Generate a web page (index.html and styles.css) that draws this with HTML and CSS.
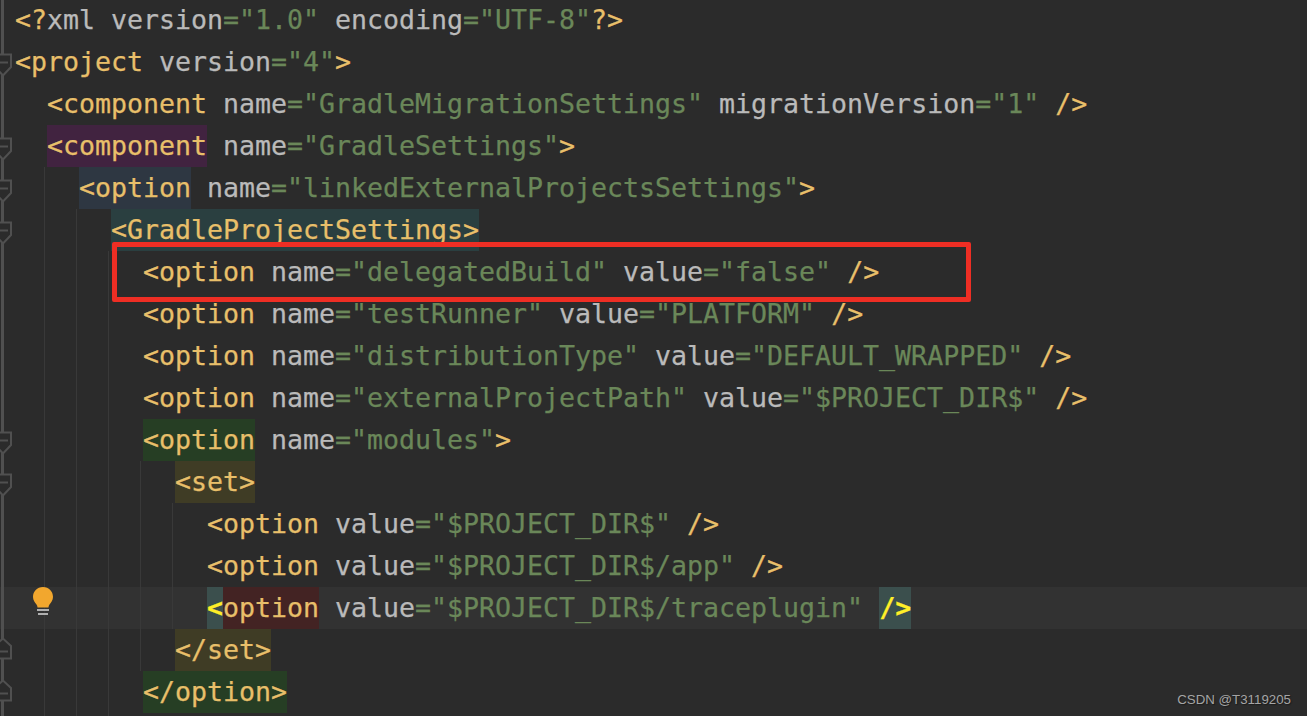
FILE: index.html
```html
<!DOCTYPE html>
<html lang="en">
<head>
<meta charset="utf-8">
<title>gradle.xml</title>
<link rel="stylesheet" href="styles.css">
</head>
<body>
<main class="editor">
  <div class="code">
    <div class="row"><span class="t">&lt;?</span><span class="a">xml version</span><span class="v">="1.0"</span> <span class="a">encoding</span><span class="v">="UTF-8"</span><span class="t">?&gt;</span></div>
    <div class="row"><span class="t">&lt;project</span> <span class="a">version</span><span class="v">="4"</span><span class="t">&gt;</span></div>
    <div class="row i1"><span class="t">&lt;component</span> <span class="a">name</span><span class="v">="GradleMigrationSettings"</span> <span class="a">migrationVersion</span><span class="v">="1"</span> <span class="t">/&gt;</span></div>
    <div class="row i1"><span class="t hl purple">&lt;component</span> <span class="a">name</span><span class="v">="GradleSettings"</span><span class="t">&gt;</span></div>
    <div class="row i2"><span class="t hl slate">&lt;option</span> <span class="a">name</span><span class="v">="linkedExternalProjectsSettings"</span><span class="t">&gt;</span></div>
    <div class="row i3"><span class="t hl teal">&lt;GradleProjectSettings&gt;</span></div>
    <div class="row i4"><span class="t">&lt;option</span> <span class="a">name</span><span class="v">="delegatedBuild"</span> <span class="a">value</span><span class="v">="false"</span> <span class="t">/&gt;</span></div>
    <div class="row i4"><span class="t">&lt;option</span> <span class="a">name</span><span class="v">="testRunner"</span> <span class="a">value</span><span class="v">="PLATFORM"</span> <span class="t">/&gt;</span></div>
    <div class="row i4"><span class="t">&lt;option</span> <span class="a">name</span><span class="v">="distributionType"</span> <span class="a">value</span><span class="v">="DEFAULT_WRAPPED"</span> <span class="t">/&gt;</span></div>
    <div class="row i4"><span class="t">&lt;option</span> <span class="a">name</span><span class="v">="externalProjectPath"</span> <span class="a">value</span><span class="v">="$PROJECT_DIR$"</span> <span class="t">/&gt;</span></div>
    <div class="row i4"><span class="t hl green">&lt;option</span> <span class="a">name</span><span class="v">="modules"</span><span class="t">&gt;</span></div>
    <div class="row i5"><span class="t hl olive">&lt;set&gt;</span></div>
    <div class="row i6"><span class="t">&lt;option</span> <span class="a">value</span><span class="v">="$PROJECT_DIR$"</span> <span class="t">/&gt;</span></div>
    <div class="row i6"><span class="t">&lt;option</span> <span class="a">value</span><span class="v">="$PROJECT_DIR$/app"</span> <span class="t">/&gt;</span></div>
    <div class="row i6 current"><span class="hl brace">&lt;</span><span class="t hl maroon">option</span> <span class="a">value</span><span class="v">="$PROJECT_DIR$/traceplugin"</span> <span class="hl brace">/&gt;</span></div>
    <div class="row i5"><span class="t hl olive">&lt;/set&gt;</span></div>
    <div class="row i4"><span class="t hl green">&lt;/option&gt;</span></div>
  </div>

  <svg class="gutter" width="1307" height="716" viewBox="0 0 1307 716" aria-hidden="true">
    <g class="guides">
      <path d="M44.5 167V716"/>
      <path d="M76.5 209V716"/>
      <path d="M108.5 251V716"/>
      <path d="M140.5 461V671"/>
      <path d="M172.5 503V629"/>
    </g>
    <path class="foldline" d="M2.5 0V716"/>
    <g class="fold">
      <path class="mark" d="M-2 54.5H11V67L3 75.5L-2 70V54.5Z"/><path d="M-1 62.5H8"/>
      <path class="mark" d="M-2 138.5H11V151L3 159.5L-2 154V138.5Z"/><path d="M-1 146.5H8"/>
      <path class="mark" d="M-2 180.5H11V193L3 201.5L-2 196V180.5Z"/><path d="M-1 188.5H8"/>
      <path class="mark" d="M-2 222.5H11V235L3 243.5L-2 238V222.5Z"/><path d="M-1 230.5H8"/>
      <path class="mark" d="M-2 432.5H11V445L3 453.5L-2 448V432.5Z"/><path d="M-1 440.5H8"/>
      <path class="mark" d="M-2 474.5H11V487L3 495.5L-2 490V474.5Z"/><path d="M-1 482.5H8"/>
      <path class="mark" d="M-2 658.5H11V646L3 638.5L-2 643V658.5Z"/><path d="M-1 651.5H8"/>
      <path class="mark" d="M-2 700.5H11V688L3 680.5L-2 685V700.5Z"/><path d="M-1 693.5H8"/>
    </g>
    <path class="bulb" d="M43 587C37 587 33 591.500 33 597C33 600.500 35 602.500 36.500 604.500C37.200 605.500 37.500 606.500 37.500 607.500H48.500C48.500 606.500 48.800 605.500 49.500 604.500C51 602.500 53 600.500 53 597C53 591.500 49 587 43 587Z"/>
    <path class="bulb-base" d="M37 610H49M38 614H48"/>
  </svg>

  <div class="callout"></div>
  <div class="watermark">CSDN @T3119205</div>
</main>
</body>
</html>
```

FILE: styles.css
```css
* {
  box-sizing: border-box;
}

html,
body {
  margin: 0;
  height: 100%;
  background: #2b2b2b;
  overflow: hidden;
}

.editor {
  position: relative;
  width: 1307px;
  height: 716px;
  overflow: hidden;
  background: #2b2b2b;
}

.code {
  display: flex;
  flex-direction: column;
  margin-top: -1px;
  font-family: "DejaVu Sans Mono", "Liberation Mono", monospace;
  font-size: 26.58px;
  color: #bababa;
  -webkit-text-stroke: 0.25px currentColor;
}

.row {
  height: 42px;
  line-height: 42px;
  padding-left: 15px;
  white-space: pre;
}

.i1 { padding-left: 47px; }
.i2 { padding-left: 79px; }
.i3 { padding-left: 111px; }
.i4 { padding-left: 143px; }
.i5 { padding-left: 175px; }
.i6 { padding-left: 207px; }

.current {
  background: #323232;
}

.t { color: #e8bf6a; }
.a { color: #bababa; }
.v { color: #6a8759; }

.hl {
  display: inline-block;
  height: 42px;
  vertical-align: top;
}

.purple { background: #412340; }
.slate { background: #2e3742; }
.teal { background: #2a3f40; }
.green { background: #263e24; }
.olive { background: #3f3c25; }
.maroon { background: #432323; }

.brace {
  background: #3b4f4d;
  color: #ffef28;
  font-weight: 700;
}

.gutter {
  position: absolute;
  inset: 0;
  pointer-events: none;
}

.guides path {
  stroke: #393939;
  fill: none;
}

.foldline {
  stroke: #505050;
  stroke-width: 3;
  fill: none;
}

.fold path {
  stroke: #505050;
  stroke-width: 2;
  fill: none;
}

.fold .mark {
  fill: #2b2b2b;
}

.bulb {
  fill: #f2a72e;
}

.bulb-base {
  stroke: #afafaf;
  stroke-width: 2;
  fill: none;
}

.callout {
  position: absolute;
  left: 112px;
  top: 242px;
  width: 859px;
  height: 60px;
  border: 5.5px solid #ee2e24;
  border-radius: 2px;
}

.watermark {
  position: absolute;
  right: 16px;
  bottom: 8px;
  font-family: "Liberation Sans", Arial, sans-serif;
  font-size: 13.3px;
  line-height: 16px;
  color: #a5a5a5;
  text-shadow: 1px 1px 1px #1c1c1c;
}
```
